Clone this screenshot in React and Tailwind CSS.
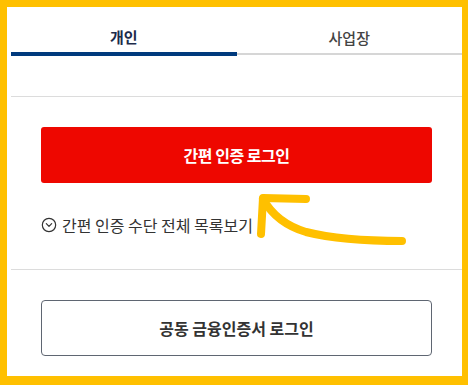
import React, { useState } from 'react';
import { CircleChevronDown } from 'lucide-react';

const tabs = ['개인', '사업장'];

// hand-drawn annotation arrow, page coordinates
const Arrow = () => (
  <svg
    className="absolute top-[-7px] left-[-7px] pointer-events-none"
    width="468"
    height="385"
    viewBox="0 0 468 385"
    fill="none"
  >
    <path
      d="M402 241 C 362 241, 330 238, 306 232 C 286 226, 272 215, 263 199"
      stroke="#ffc000"
      strokeWidth="8"
      strokeLinecap="round"
      strokeLinejoin="round"
    />
    <path
      d="M306 199 L263 198 L261 234"
      stroke="#ffc000"
      strokeWidth="8"
      strokeLinecap="round"
      strokeLinejoin="round"
    />
  </svg>
);

export default function App() {
  const [active, setActive] = useState(0);

  return (
    <div
      className="relative w-[468px] h-[385px] bg-white border-[#ffc000] border-t-[7px] border-l-[7px] border-r-[6px] border-b-[9px] overflow-hidden"
      style={{ fontFamily: '"Noto Sans CJK KR", "Noto Sans", sans-serif' }}
    >
      <div className="pl-[4px] h-full flex flex-col">
        {/* tabs */}
        <div className="flex items-start">
          {tabs.map((t, i) => (
            <button
              key={t}
              onClick={() => setActive(i)}
              className={
                i === active
                  ? 'flex-1 h-[49px] pt-[15px] border-b-4 border-[#003a7d] text-[15px] leading-6 font-bold text-[#1c2b4a]'
                  : 'flex-1 h-[48px] pt-[15px] border-b-2 border-[#d6d6d6] text-[15px] leading-6 font-medium text-[#444]'
              }
            >
              {t}
            </button>
          ))}
        </div>

        <div className="h-[41px] border-b border-[#dcdcdc]" />

        {/* easy login */}
        <div className="px-[30px] pt-[30px] pb-[34px] border-b border-[#dcdcdc]">
          <button className="w-full h-[56px] rounded-[3px] bg-[#ee0700] text-white text-[16px] tracking-[-0.5px] font-bold">
            간편 인증 로그인
          </button>
          <div className="mt-[32px] h-5 flex items-center gap-[5px] text-[16px] leading-5 text-[#333]">
            <CircleChevronDown className="w-4 h-4" strokeWidth={1.8} />
            <span>간편 인증 수단 전체 목록보기</span>
          </div>
        </div>

        {/* certificate login */}
        <div className="px-[30px] pt-[30px]">
          <button className="w-full h-[56px] rounded-[4px] border border-[#5f6672] bg-white text-[16px] font-semibold text-[#333]">
            공동 금융인증서 로그인
          </button>
        </div>
      </div>
      <Arrow />
    </div>
  );
}
